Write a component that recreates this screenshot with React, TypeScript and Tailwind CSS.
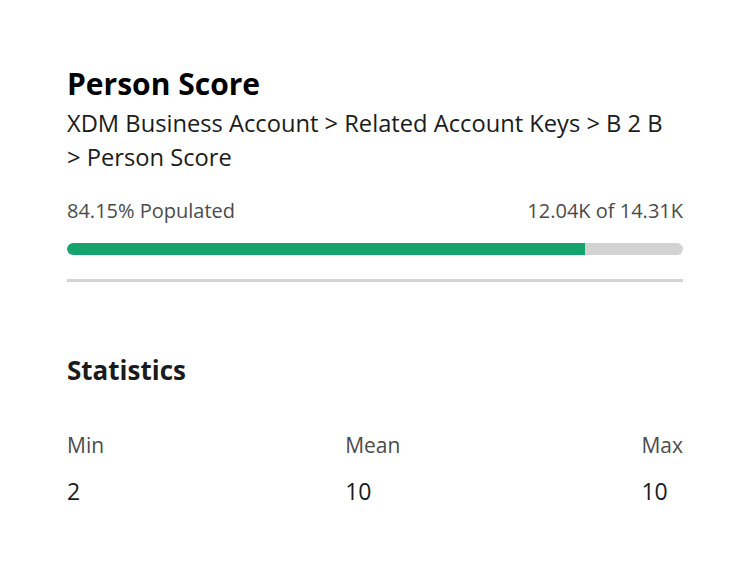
export default function App() {
  const stats = [
    { label: 'Min', value: '2' },
    { label: 'Mean', value: '10' },
    { label: 'Max', value: '10' },
  ]

  return (
    <div className="min-h-[574px] w-[750px] bg-white px-[67px] pt-[64px] font-['Open_Sans',sans-serif] text-[#2c2c2c]">
      {/* Header */}
      <h1 className="text-[30px] font-bold leading-[40px] text-black">Person Score</h1>
      <div className="mt-[2px] text-[23.7px] leading-[34px] text-[#1b1b1b]">
        XDM Business Account &gt; Related Account Keys &gt; B 2 B &gt;&nbsp;Person Score
      </div>

      {/* Populated */}
      <div className="mt-[24px] flex justify-between text-[20px] leading-[26px] text-[#4b4b4b]">
        <span>84.15% Populated</span>
        <span>12.04K of 14.31K</span>
      </div>
      <div className="mt-[19px] h-[12px] w-full overflow-hidden rounded-full bg-[#d3d3d3]">
        <div className="h-full rounded-l-full bg-[#15a46e]" style={{ width: '84.15%' }}></div>
      </div>
      <div className="mt-[24px] h-[3px] w-full bg-[#d3d3d3]"></div>

      {/* Statistics */}
      <h2 className="mt-[70px] text-[26px] font-bold leading-[36px] text-[#1b1b1b]">Statistics</h2>
      <div className="mt-[43px] flex justify-between">
        {stats.map((s) => (
          <div key={s.label}>
            <div className="text-[21px] leading-[28px] text-[#4b4b4b]">{s.label}</div>
            <div className="mt-[17px] text-[23px] leading-[30px] text-[#1b1b1b]">{s.value}</div>
          </div>
        ))}
      </div>
    </div>
  )
}
